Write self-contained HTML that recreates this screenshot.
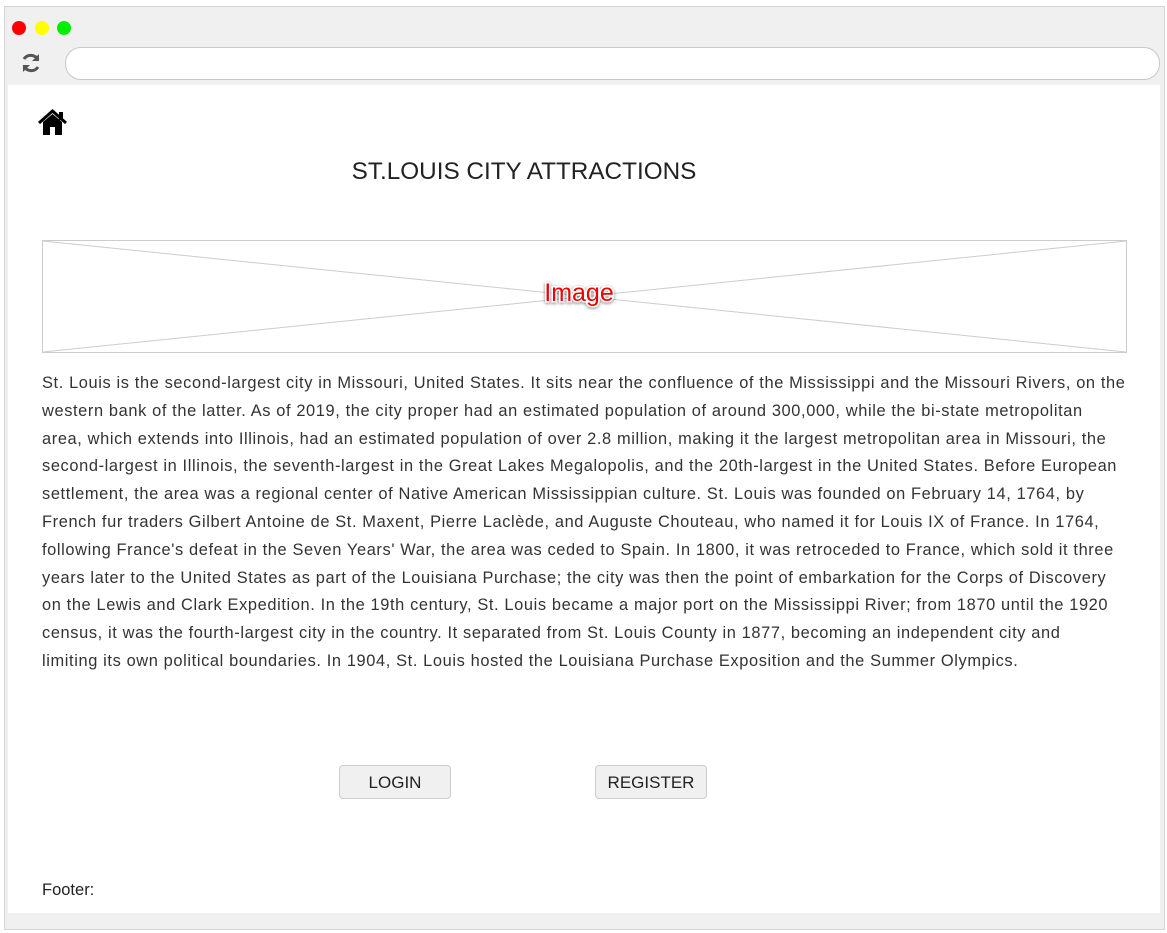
<!DOCTYPE html>
<html><head><style>
body{margin:0;width:1167px;height:933px;background:#fff;font-family:"Liberation Sans",sans-serif;position:relative;overflow:hidden}
.frame{position:absolute;left:4px;top:6px;width:1159px;height:922px;background:#f0f0f0;border:1px solid #d4d4d4}
.dot{position:absolute;top:21px;width:14px;height:14px;border-radius:50%}
.url{position:absolute;left:65px;top:47px;width:1093px;height:31px;background:#fff;border:1px solid #c8c8c8;border-radius:16px}
.content{position:absolute;left:8px;top:85px;width:1152px;height:828px;background:#fff}
h1{position:absolute;left:0;width:1048px;top:158px;margin:0;text-align:center;font-weight:normal;font-size:24.3px;color:#222}
.img{position:absolute;left:42px;top:240px;width:1083px;height:111px;border:1px solid #ccc}
p{position:absolute;left:42px;top:370px;width:1120px;margin:0;font-size:16.4px;letter-spacing:0.62px;line-height:27.8px;color:#333;white-space:nowrap}
.btn{position:absolute;top:765px;width:110px;height:32px;background:#f0f0f0;border:1px solid #ccc;border-radius:4px;font-size:17px;color:#222;text-align:center;line-height:33px}
</style></head><body>
<div class="frame"></div>
<div class="dot" style="left:12px;background:#f00"></div>
<div class="dot" style="left:35px;background:#ff0"></div>
<div class="dot" style="left:57px;background:#0e0"></div>
<svg style="position:absolute;left:20px;top:52px" width="22" height="22" viewBox="0 0 22 22"><path d="M18 8A8 8 0 0 0 4 7M4 14A8 8 0 0 0 18 15" fill="none" stroke="#555" stroke-width="3"/><path d="M19 2v7h-7zM3 20v-7h7z" fill="#555"/></svg>
<div class="url"></div>
<div class="content"></div>
<svg style="position:absolute;left:37px;top:109px" width="31" height="27" viewBox="0 0 31 27"><path d="M2 14L15.5 2L29 14" fill="none" stroke="#000" stroke-width="3"/><rect x="22" y="3" width="4" height="8"/><path d="M6 13L15.5 5L25 13V26H18V18H13V26H6Z"/></svg>
<h1>ST.LOUIS CITY ATTRACTIONS</h1>
<svg class="img" viewBox="0 0 1083 111" preserveAspectRatio="none"><defs><filter id="s"><feDropShadow dx="0" dy="1" stdDeviation="1.5" flood-color="#000" flood-opacity="0.5"/></filter></defs><line x1="0" y1="0" x2="1083" y2="111" stroke="#ccc"/><line x1="0" y1="111" x2="1083" y2="0" stroke="#ccc"/><text x="536" y="60" text-anchor="middle" font-family="Liberation Sans" font-size="25" fill="#e00" stroke="#fff" stroke-width="3" paint-order="stroke" filter="url(#s)">Image</text></svg>
<p>St. Louis is the second-largest city in Missouri, United States. It sits near the confluence of the Mississippi and the Missouri Rivers, on the<br>western bank of the latter. As of 2019, the city proper had an estimated population of around 300,000, while the bi-state metropolitan<br>area, which extends into Illinois, had an estimated population of over 2.8 million, making it the largest metropolitan area in Missouri, the<br>second-largest in Illinois, the seventh-largest in the Great Lakes Megalopolis, and the 20th-largest in the United States. Before European<br>settlement, the area was a regional center of Native American Mississippian culture. St. Louis was founded on February 14, 1764, by<br>French fur traders Gilbert Antoine de St. Maxent, Pierre Laclède, and Auguste Chouteau, who named it for Louis IX of France. In 1764,<br>following France's defeat in the Seven Years' War, the area was ceded to Spain. In 1800, it was retroceded to France, which sold it three<br>years later to the United States as part of the Louisiana Purchase; the city was then the point of embarkation for the Corps of Discovery<br>on the Lewis and Clark Expedition. In the 19th century, St. Louis became a major port on the Mississippi River; from 1870 until the 1920<br>census, it was the fourth-largest city in the country. It separated from St. Louis County in 1877, becoming an independent city and<br>limiting its own political boundaries. In 1904, St. Louis hosted the Louisiana Purchase Exposition and the Summer Olympics.</p>
<div class="btn" style="left:339px">LOGIN</div>
<div class="btn" style="left:595px">REGISTER</div>
<div style="position:absolute;left:42px;top:881px;font-size:16.5px;color:#222">Footer:</div>
</body></html>
